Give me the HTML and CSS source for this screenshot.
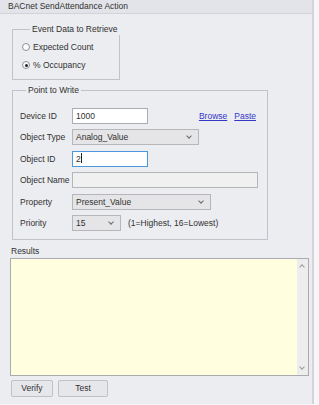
FILE: index.html
```html
<!DOCTYPE html>
<html lang="en">
<head>
  <meta charset="UTF-8">
  <meta name="viewport" content="width=device-width, initial-scale=1.0">
  <title>BACnet SendAttendance Action</title>
  <link rel="stylesheet" href="styles.css">
</head>
<body>

<div class="window">
  <div class="titlebar">BACnet SendAttendance Action</div>

  <div class="content">
    <fieldset class="group group-event">
      <legend>Event Data to Retrieve</legend>
      <div class="radio"><span class="dot"></span>Expected Count</div>
      <div class="radio"><span class="dot checked"></span>% Occupancy</div>
    </fieldset>

    <fieldset class="group group-point">
      <legend>Point to Write</legend>
      <div class="row">
        <span class="lbl">Device ID</span>
        <span class="field w-short">1000</span>
        <span class="links"><a href="#">Browse</a><a href="#">Paste</a></span>
      </div>
      <div class="row">
        <span class="lbl">Object Type</span>
        <span class="select w-type">Analog_Value<span class="chev"></span></span>
      </div>
      <div class="row">
        <span class="lbl">Object ID</span>
        <span class="field w-short focused">2<span class="caret"></span></span>
      </div>
      <div class="row">
        <span class="lbl">Object Name</span>
        <span class="field w-name disabled"></span>
      </div>
      <div class="row">
        <span class="lbl">Property</span>
        <span class="select w-prop">Present_Value<span class="chev"></span></span>
      </div>
      <div class="row">
        <span class="lbl">Priority</span>
        <span class="select w-prio">15<span class="chev"></span></span>
        <span class="hint">(1=Highest, 16=Lowest)</span>
      </div>
    </fieldset>

    <div class="results-label">Results</div>
    <div class="results">
      <div class="results-text"></div>
      <div class="scrollbar">
        <span class="arrow up"></span>
        <span class="arrow down"></span>
      </div>
    </div>

    <div class="buttons">
      <button class="btn btn-verify">Verify</button>
      <button class="btn btn-test">Test</button>
    </div>
  </div>
</div>

</body>
</html>
```

FILE: styles.css
```css
html, body {
  margin: 0;
  padding: 0;
  background-color: #f6f6f8;
}
body {
  font-family: "Liberation Sans", Arial, sans-serif;
  font-size: 8.5px;
  color: #303030;
}
.window {
  width: 314px;
  height: 404px;
  background-color: #ecedf1;
  border-right: 2px solid #d4d5da;
  box-sizing: border-box;
}
.titlebar {
  height: 14px;
  line-height: 13px;
  padding-left: 8px;
  background-color: #e3e4e9;
  border-bottom: 1px solid #d2d3d8;
  box-sizing: border-box;
}
.content {
  padding: 0 0 0 10px;
}
.group {
  margin: 0 0 0 2px;
  padding: 0;
  border: 1px solid #c2c3c8;
  box-sizing: border-box;
  min-width: 0;
}
.group legend {
  padding: 0 2px;
  margin-left: 6px;
  line-height: 11px;
  white-space: nowrap;
}
.group-event legend {
  margin-left: 8px;
}
.group-event {
  width: 108px;
  margin-top: 10px;
  padding: 6px 0 8px 9px;
}
.radio {
  display: flex;
  align-items: center;
  height: 12px;
}
.radio + .radio {
  margin-top: 6px;
}
.dot {
  width: 8px;
  height: 8px;
  margin-right: 3px;
  border: 1px solid #8d8f94;
  border-radius: 50%;
  background-color: #fdfdfd;
  box-sizing: border-box;
  position: relative;
}
.dot.checked::after {
  content: "";
  position: absolute;
  left: 1.5px;
  top: 1.5px;
  width: 3px;
  height: 3px;
  border-radius: 50%;
  background-color: #222;
}
.group-point {
  width: 256px;
  margin-top: 5px;
  padding: 12px 11px 8px 7px;
}
.row {
  display: flex;
  align-items: center;
  height: 16px;
}
.row + .row {
  margin-top: 5.4px;
}
.lbl {
  width: 52px;
  flex: none;
}
.field, .select {
  height: 16px;
  line-height: 14px;
  padding-left: 3px;
  box-sizing: border-box;
  border: 1px solid #abadb3;
  background-color: #fff;
  position: relative;
  flex: none;
}
.field.focused {
  border-color: #4d97dc;
}
.field.disabled {
  background-color: #f0f0f1;
  border-color: #b5b6ba;
}
.caret {
  display: inline-block;
  width: 1px;
  height: 10px;
  background-color: #222;
  vertical-align: -1px;
}
.select {
  background-color: #e5e5e7;
  border-color: #b6b7bb;
}
.chev {
  position: absolute;
  right: 7px;
  top: 4px;
  width: 3px;
  height: 3px;
  border-right: 1px solid #6a6a6e;
  border-bottom: 1px solid #6a6a6e;
  transform: rotate(45deg);
}
.w-short { width: 76px; }
.w-type { width: 127px; }
.w-name { width: 186px; }
.w-prop { width: 139px; }
.w-prio { width: 49px; }
.links {
  margin-left: auto;
  display: flex;
  gap: 7px;
}
.links a {
  color: #3535c8;
  text-decoration: underline;
}
.hint {
  margin-left: 7px;
}
.results-label {
  margin: 5px 0 0 1px;
  height: 13px;
  line-height: 12px;
}
.results {
  display: flex;
  width: 299px;
  height: 118px;
  border: 1px solid #a9abb0;
  box-sizing: border-box;
  background-color: #ffffe0;
}
.results-text {
  flex: 1;
}
.scrollbar {
  width: 11px;
  background-color: #ededee;
  position: relative;
}
.arrow {
  position: absolute;
  left: 3px;
  width: 3px;
  height: 3px;
  border-left: 1px solid #9a9a9e;
  border-top: 1px solid #9a9a9e;
}
.arrow.up {
  top: 6px;
  transform: rotate(45deg);
}
.arrow.down {
  bottom: 6px;
  transform: rotate(225deg);
}
.buttons {
  display: flex;
  gap: 5px;
  margin: 4px 0 0 1px;
}
.btn {
  height: 17px;
  padding: 0;
  font-family: inherit;
  font-size: 8.5px;
  color: #303030;
  background-color: #e6e7eb;
  border: 1px solid #c0c1c6;
  border-radius: 2px;
}
.btn-verify { width: 42px; }
.btn-test { width: 50px; }
```
